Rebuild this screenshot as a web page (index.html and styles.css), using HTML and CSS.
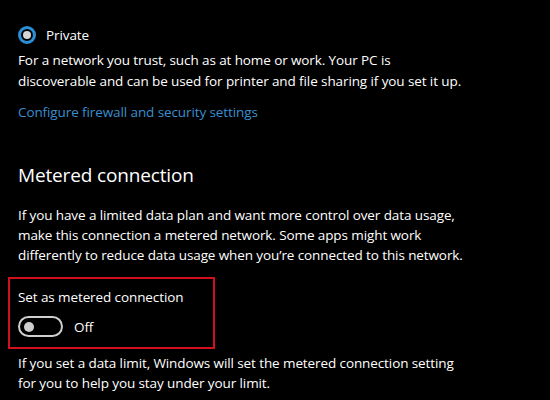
FILE: index.html
```html
<!DOCTYPE html>
<html>
<head>
<meta charset="utf-8">
<link rel="stylesheet" href="styles.css">
</head>
<body>
<div class="page">
  <div class="radio-row">
    <span class="radio"><span class="radio-dot"></span></span>
    <span class="radio-label">Private</span>
  </div>
  <p class="desc first">For a network you trust, such as at home or work. Your PC is<br>discoverable and can be used for printer and file sharing if you set it up.</p>
  <a class="link" href="#">Configure firewall and security settings</a>
  <h2 class="heading">Metered connection</h2>
  <p class="desc para">If you have a limited data plan and want more control over data usage,<br>make this connection a metered network. Some apps might work<br>differently to reduce data usage when you’re connected to this network.</p>
  <div class="highlight">
    <div class="setting-label">Set as metered connection</div>
    <div class="toggle-row">
      <span class="toggle"><span class="knob"></span></span>
      <span class="toggle-state">Off</span>
    </div>
  </div>
  <p class="desc bottom">If you set a data limit, Windows will set the metered connection setting<br>for you to help you stay under your limit.</p>
</div>
</body>
</html>
```
FILE: styles.css
```css
html, body {
  margin: 0;
  padding: 0;
  background: #000;
}
body {
  width: 550px;
  height: 400px;
  overflow: hidden;
  font-family: "Open Sans", "Noto Sans", sans-serif;
  color: #fff;
  letter-spacing: -0.1px;
}
.page {
  padding: 26px 0 0 18px;
  width: 530px;
}
.radio-row {
  display: flex;
  align-items: center;
  gap: 10px;
  height: 18px;
}
.radio {
  box-sizing: border-box;
  width: 18px;
  height: 18px;
  border: 3px solid #2a8fd6;
  border-radius: 50%;
  display: flex;
  align-items: center;
  justify-content: center;
}
.radio-dot {
  width: 8px;
  height: 8px;
  border-radius: 50%;
  background: #d6d6d6;
}
.radio-label {
  font-size: 13.5px;
}
.desc {
  margin: 0;
  font-size: 13.5px;
  line-height: 20px;
  white-space: nowrap;
}
.desc.first {
  margin-top: 6px;
  line-height: 21px;
}
.link {
  display: block;
  margin-top: 10px;
  font-size: 13.5px;
  line-height: 20px;
  color: #3b8fcf;
  text-decoration: none;
}
.heading {
  margin: 40px 0 0 0;
  font-size: 19px;
  font-weight: 400;
  line-height: 26px;
  letter-spacing: -0.15px;
}
.para {
  margin-top: 17px;
}
.highlight {
  margin: 12px 0 0 -10px;
  box-sizing: border-box;
  width: 207px;
  height: 72px;
  border: 2px solid #d0101c;
  padding: 8px 0 0 8px;
}
.setting-label {
  font-size: 13.5px;
  line-height: 20px;
}
.toggle-row {
  display: flex;
  align-items: center;
  gap: 11px;
  margin-top: 9px;
}
.toggle {
  box-sizing: border-box;
  width: 45px;
  height: 21px;
  border: 2px solid #cfcfcf;
  border-radius: 11px;
  display: flex;
  align-items: center;
  padding-left: 4px;
}
.knob {
  width: 10px;
  height: 10px;
  border-radius: 50%;
  background: #cfcfcf;
}
.toggle-state {
  font-size: 13.5px;
}
.bottom {
  margin-top: 4px;
}
```
